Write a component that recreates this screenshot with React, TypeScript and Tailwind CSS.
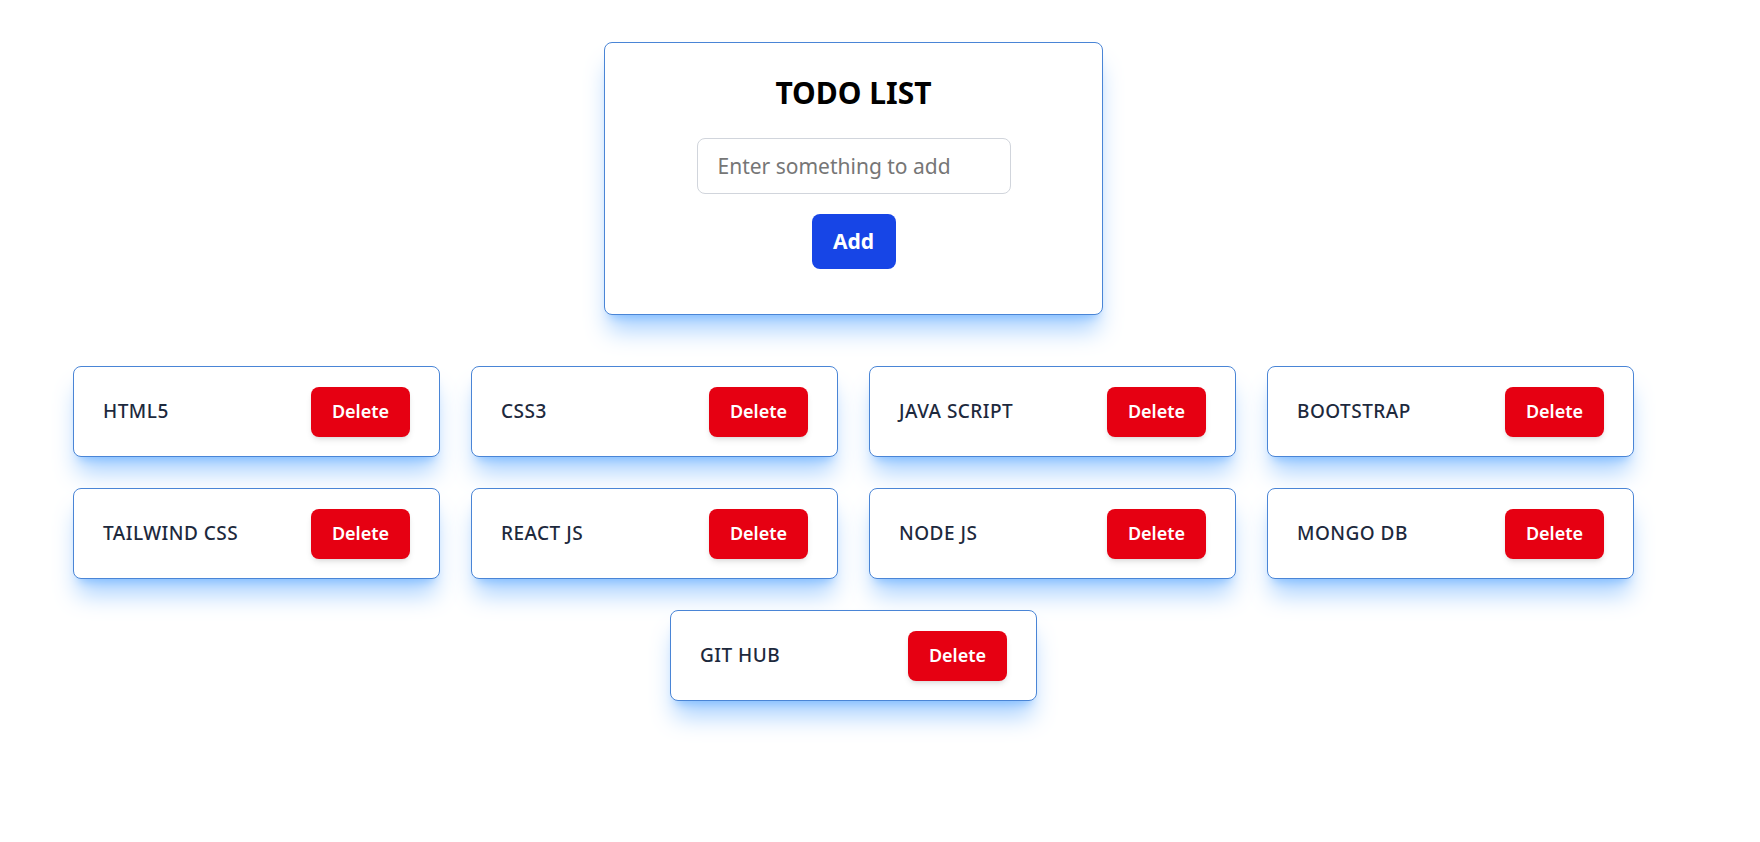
import { useState } from 'react';

const initialTodos = [
  'HTML5',
  'CSS3',
  'JAVA SCRIPT',
  'BOOTSTRAP',
  'TAILWIND CSS',
  'REACT JS',
  'NODE JS',
  'MONGO DB',
  'GIT HUB',
];

const App = () => {
  const [todos, setTodos] = useState<string[]>(initialTodos);
  const [text, setText] = useState('');

  const addTodo = () => {
    if (!text.trim()) return;
    setTodos([...todos, text.trim().toUpperCase()]);
    setText('');
  };

  const deleteTodo = (index: number) => {
    setTodos(todos.filter((_, i) => i !== index));
  };

  return (
    <div className="min-h-screen bg-white font-['Noto_Sans',sans-serif]">
      <div className="w-[1707px] flex flex-col items-center pt-[42px]">
        {/* Input card */}
        <div className="w-[499px] h-[273px] flex flex-col items-center pt-[30px] bg-white border border-[#4a85d6] rounded-lg shadow-xl shadow-blue-400/50">
          <h1 className="text-[30px] font-bold text-black leading-[40px]">TODO LIST</h1>
          <input
            type="text"
            value={text}
            onChange={(e) => setText(e.target.value)}
            placeholder="Enter something to add"
            className="mt-[25px] w-[314px] h-[56px] px-[20px] text-[21px] text-gray-800 placeholder:text-[#767676] border border-gray-300 rounded-lg outline-none"
          />
          <button
            onClick={addTodo}
            className="mt-[20px] w-[84px] h-[55px] bg-[#1745e6] text-white text-[21px] font-bold rounded-lg"
          >
            Add
          </button>
        </div>

        {/* Todo items */}
        <div className="mt-[51px] w-[1561px] flex flex-wrap justify-center gap-x-[31px] gap-y-[31px]">
          {todos.map((todo, index) => (
            <div
              key={index}
              className="w-[367px] h-[91px] flex items-center justify-between px-[29px] bg-white border border-[#4a85d6] rounded-lg shadow-xl shadow-blue-400/50"
            >
              <span className="text-[19px] font-medium tracking-wide text-slate-800">{todo}</span>
              <button
                onClick={() => deleteTodo(index)}
                className="w-[99px] h-[50px] bg-[#e60012] text-white text-[18px] font-semibold rounded-lg shadow-md"
              >
                Delete
              </button>
            </div>
          ))}
        </div>
      </div>
    </div>
  );
};

export default App;
